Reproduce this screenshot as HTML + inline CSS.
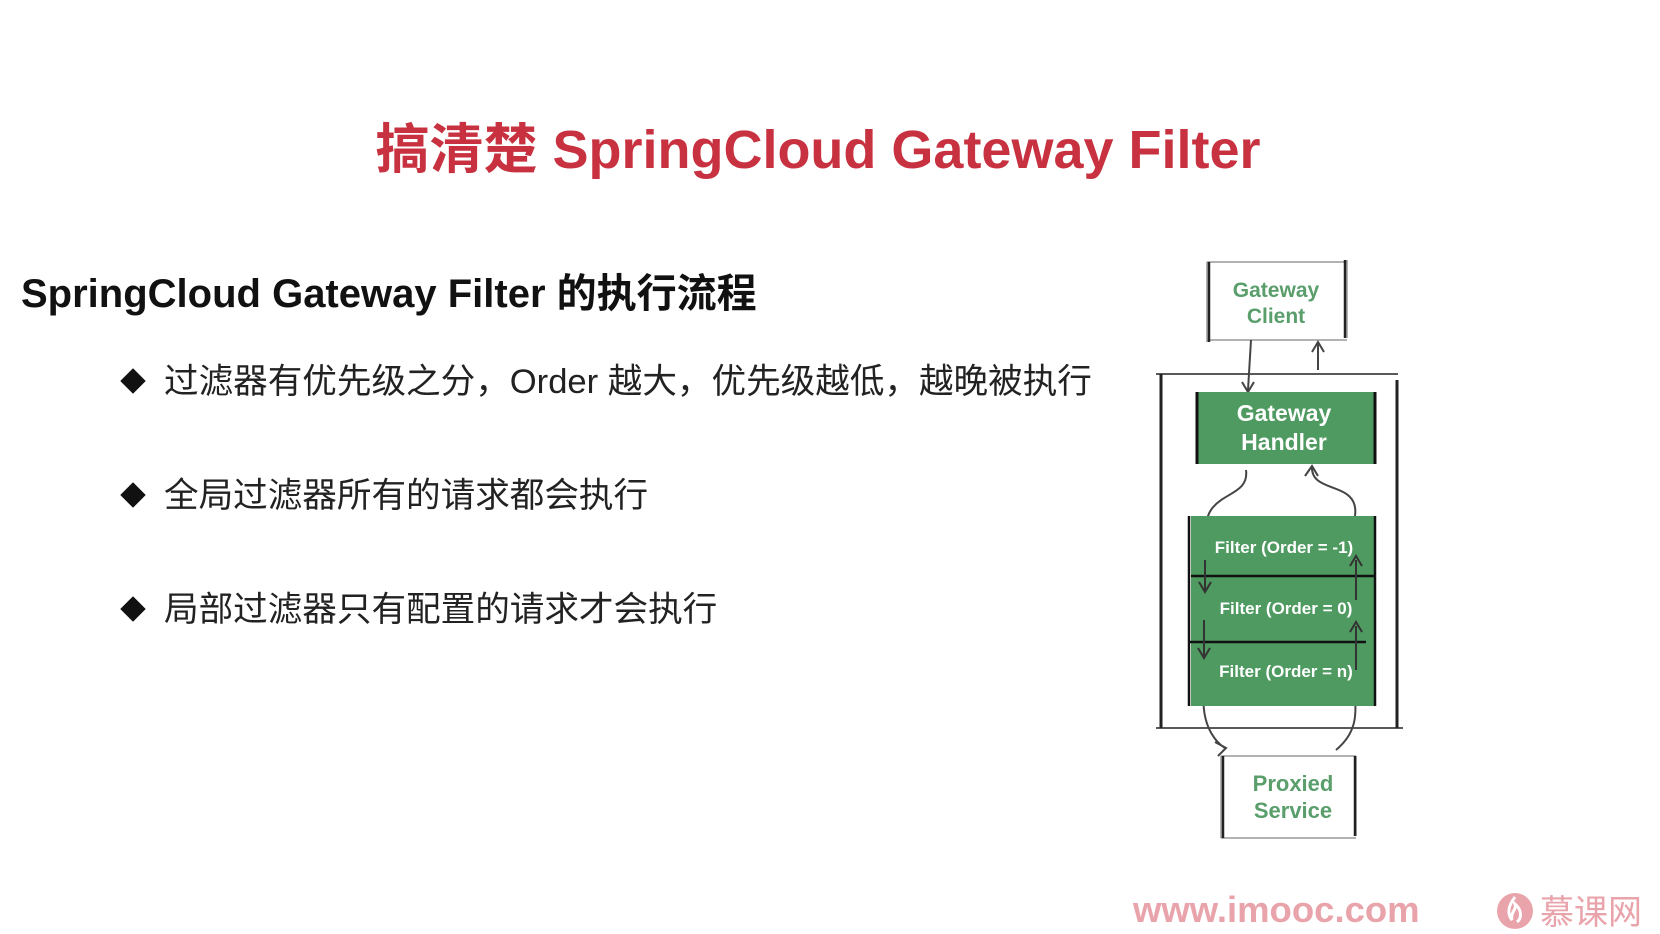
<!DOCTYPE html>
<html><head><meta charset="utf-8"><style>
body{margin:0;width:1660px;height:934px;background:#fff;position:relative;overflow:hidden;font-family:"Liberation Sans","Noto Sans CJK SC",sans-serif}
.a{position:absolute;white-space:nowrap}
#t{left:0;width:1636px;text-align:center;top:105px;font-size:54px;font-weight:bold;color:#c8313f}
#s{left:21px;top:261px;font-size:40px;font-weight:bold;color:#111}
.b{left:120px;font-size:34.6px;color:#222}
.b span{display:inline-block;width:18px;height:18px;background:#111;transform:rotate(45deg);margin:0 22px 6px 4px;vertical-align:middle}
</style></head><body>
<div class="a" id="t">搞清楚 SpringCloud Gateway Filter</div>
<div class="a" id="s">SpringCloud Gateway Filter 的执行流程</div>
<div class="a b" style="top:353px"><span></span>过滤器有优先级之分，Order 越大，优先级越低，越晚被执行</div>
<div class="a b" style="top:467px"><span></span>全局过滤器所有的请求都会执行</div>
<div class="a b" style="top:581px"><span></span>局部过滤器只有配置的请求才会执行</div>
<svg class="a" style="left:0;top:0" width="1660" height="934">
<g fill="none" stroke="#222" stroke-width="2">
<path d="M1207 262 V342 M1347 260 V338 M1207 262 H1347 M1207 340 H1347" stroke-width="1.5" stroke="#999"/>
<path d="M1209 262 V342 M1345 260 V338" stroke-width="2.5"/>
<path d="M1156 374 H1398 M1156 728 H1403" stroke-width="1.5"/>
<path d="M1161 374 V728 M1397 380 V728" stroke-width="3"/>
<path d="M1251 340 L1248 390 M1242 382 L1248 392 L1254 382 M1318 370 V344 M1312 352 L1318 342 L1324 352" stroke="#444"/>
<path d="M1246 470 C1250 500 1205 490 1206 530 M1200 520 L1206 532 L1212 520" stroke="#444"/>
<path d="M1355 516 C1360 480 1310 495 1312 466 M1305 476 L1312 466 L1318 476" stroke="#444"/>
<path d="M1204 690 C1200 730 1220 745 1225 748 M1215 742 L1226 748 L1218 756" stroke="#444"/>
<path d="M1336 750 C1360 730 1355 710 1355 690 M1349 700 L1355 690 L1361 700" stroke="#444"/>
<path d="M1221 756 V838 M1356 756 V836 M1221 756 H1356 M1221 838 H1356" stroke="#999" stroke-width="1.5"/>
<path d="M1223 756 V838 M1355 756 V836" stroke-width="2.5"/>
</g>
<rect x="1197" y="392" width="178" height="72" fill="#4e9a60"/>
<path d="M1197 392 V464 M1375 392 V464" stroke="#111" stroke-width="3"/>
<rect x="1191" y="516" width="184" height="190" fill="#4e9a60"/>
<path d="M1189 516 V706 M1375 516 V706" stroke="#111" stroke-width="2.5"/>
<path d="M1191 576 H1375 M1188 642 H1366" stroke="#111" stroke-width="2.5"/>
<g fill="none" stroke="#333" stroke-width="2">
<path d="M1205 560 V590 M1199 582 L1205 592 L1211 582 M1204 620 V656 M1198 648 L1204 658 L1210 648"/>
<path d="M1356 600 V560 M1350 566 L1356 556 L1362 566 M1356 670 V626 M1350 632 L1356 622 L1362 632"/>
</g>
<text x="1276" y="297" text-anchor="middle" font-family="Liberation Sans" font-weight="bold" font-size="21" fill="#5a9e6c">Gateway</text>
<text x="1276" y="323" text-anchor="middle" font-family="Liberation Sans" font-weight="bold" font-size="21" fill="#5a9e6c">Client</text>
<text x="1284" y="421" text-anchor="middle" font-family="Liberation Sans" font-weight="bold" font-size="23" fill="#fff">Gateway</text>
<text x="1284" y="450" text-anchor="middle" font-family="Liberation Sans" font-weight="bold" font-size="23" fill="#fff">Handler</text>
<text x="1284" y="553" text-anchor="middle" font-family="Liberation Sans" font-weight="bold" font-size="17" fill="#fff">Filter (Order = -1)</text>
<text x="1286" y="614" text-anchor="middle" font-family="Liberation Sans" font-weight="bold" font-size="17" fill="#fff">Filter (Order = 0)</text>
<text x="1286" y="677" text-anchor="middle" font-family="Liberation Sans" font-weight="bold" font-size="17" fill="#fff">Filter (Order = n)</text>
<text x="1293" y="791" text-anchor="middle" font-family="Liberation Sans" font-weight="bold" font-size="22" fill="#5a9e6c">Proxied</text>
<text x="1293" y="818" text-anchor="middle" font-family="Liberation Sans" font-weight="bold" font-size="22" fill="#5a9e6c">Service</text>
<text x="1133" y="922" font-family="Liberation Sans" font-weight="bold" font-size="36.5" fill="#e9a3ab">www.imooc.com</text>
<circle cx="1515" cy="911" r="18" fill="#e9a3ab"/>
<path d="M1515 897 C1508 906 1507 914 1512 920 C1510 912 1517 910 1515 904 C1522 910 1522 918 1517 922" fill="none" stroke="#fff" stroke-width="3"/>
<text x="1540" y="924" font-family="Noto Sans CJK SC" font-size="34" fill="#e9a3ab">慕课网</text>
</svg>
</body></html>
